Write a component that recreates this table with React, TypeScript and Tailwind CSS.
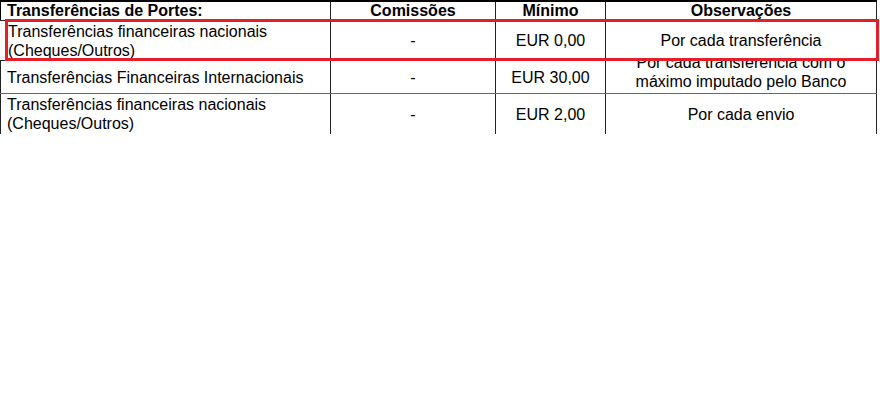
import React from "react";

const cols = "grid grid-cols-[331px_165px_110px_271px]";
const v = "border-r border-[#222]";

export default function App() {
  return (
    <div
      className="w-[880px] h-[415px] bg-white text-black"
      style={{ fontFamily: '"Liberation Sans", Arial, sans-serif' }}
    >
      <div className="relative w-[877px] text-[16px] leading-[19px]">
        {/* header */}
        <div className={`${cols} border-t-2 border-black border-b border-b-[#222] font-bold h-[21px]`}>
          <div className={`${v} border-l border-l-black pl-[6px] leading-[18px]`}>Transferências de Portes:</div>
          <div className={`${v} text-center leading-[18px]`}>Comissões</div>
          <div className={`${v} text-center leading-[18px]`}>Mínimo</div>
          <div className={`${v} text-center leading-[18px]`}>Observações</div>
        </div>
        {/* row 1 */}
        <div className={`${cols} h-[40px] border-b border-[#222]`}>
          <div className={`${v} border-l border-l-transparent pl-[7px] flex flex-col justify-center`}>
            <span>Transferências financeiras nacionais</span>
            <span>(Cheques/Outros)</span>
          </div>
          <div className={`${v} flex items-center justify-center`}>-</div>
          <div className={`${v} flex items-center justify-center`}>EUR 0,00</div>
          <div className={`${v} flex items-center justify-center`}>Por cada transferência</div>
        </div>
        {/* row 2 */}
        <div className={`${cols} h-[33px] border-b border-[#666]`}>
          <div className={`${v} border-l border-l-[#222] pl-[6px] flex items-center`}>
            Transferências Financeiras Internacionais
          </div>
          <div className={`${v} flex items-center justify-center`}>-</div>
          <div className={`${v} flex items-center justify-center`}>EUR 30,00</div>
          <div className={`${v} overflow-hidden text-center`}>
            <div className="mt-[-8px]">
              <div>Por cada transferencia com o</div>
              <div>máximo imputado pelo Banco</div>
            </div>
          </div>
        </div>
        {/* row 3 */}
        <div className={`${cols} h-[40px]`}>
          <div className={`${v} border-l border-l-[#222] pl-[6px] flex flex-col justify-center`}>
            <span>Transferências financeiras nacionais</span>
            <span>(Cheques/Outros)</span>
          </div>
          <div className={`${v} flex items-center justify-center`}>-</div>
          <div className={`${v} flex items-center justify-center`}>EUR 2,00</div>
          <div className={`${v} flex items-center justify-center`}>Por cada envio</div>
        </div>
        {/* red highlight */}
        <div className="absolute left-[5px] top-[19px] w-[874px] h-[42px] border-[3px] border-[#e3202a] pointer-events-none" />
      </div>
    </div>
  );
}
